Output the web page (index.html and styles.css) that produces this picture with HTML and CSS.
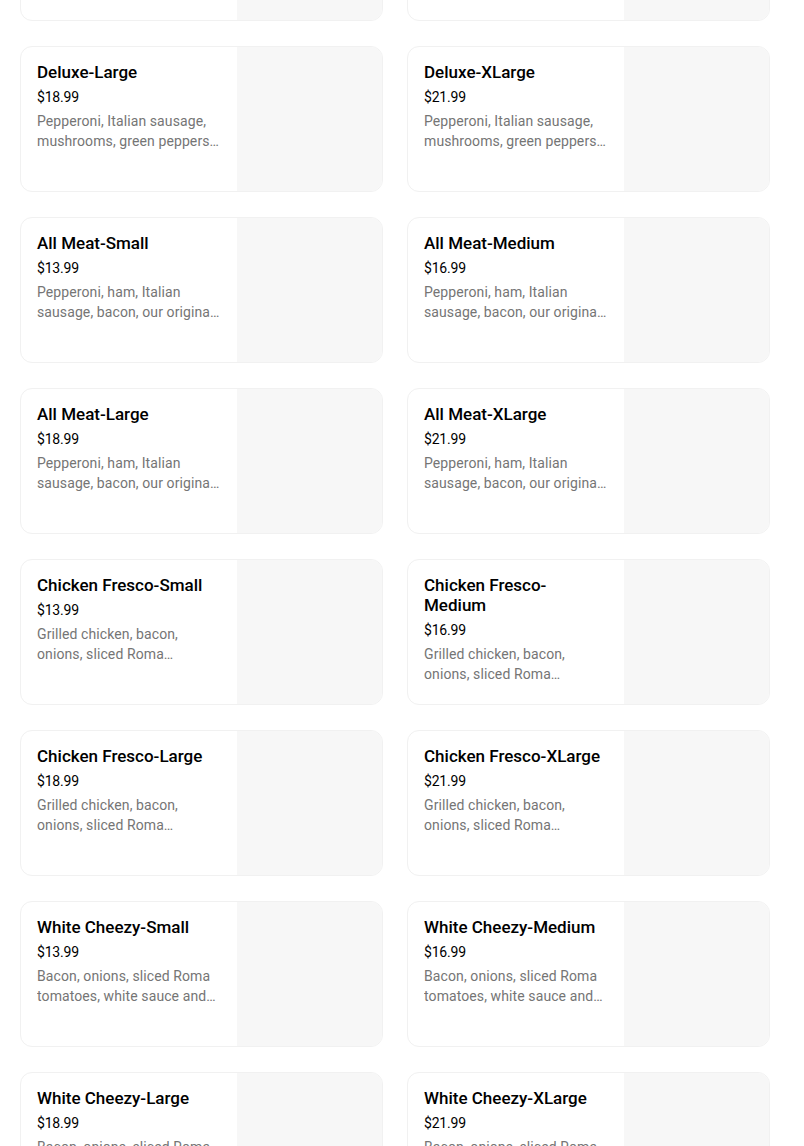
FILE: index.html
```html
<!doctype html>
<html>
<head>
	<meta charset="UTF-8">
	<meta name="viewport" content="width=device-width, initial-scale=1.0">
	<title>Menu</title>
	<link rel="stylesheet" href="styles.css">
</head>
<body>
	<div class="menu">
		<div class="item">
			<div class="info">
				<div class="name">Deluxe-Small</div>
				<div class="price">$13.99</div>
				<div class="desc">Pepperoni, Italian sausage, mushrooms, green peppers, onions and black olives.</div>
			</div>
			<div class="photo"></div>
		</div>
		<div class="item">
			<div class="info">
				<div class="name">Deluxe-Medium</div>
				<div class="price">$16.99</div>
				<div class="desc">Pepperoni, Italian sausage, mushrooms, green peppers, onions and black olives.</div>
			</div>
			<div class="photo"></div>
		</div>
		<div class="item">
			<div class="info">
				<div class="name">Deluxe-Large</div>
				<div class="price">$18.99</div>
				<div class="desc">Pepperoni, Italian sausage, mushrooms, green peppers, onions and black olives.</div>
			</div>
			<div class="photo"></div>
		</div>
		<div class="item">
			<div class="info">
				<div class="name">Deluxe-XLarge</div>
				<div class="price">$21.99</div>
				<div class="desc">Pepperoni, Italian sausage, mushrooms, green peppers, onions and black olives.</div>
			</div>
			<div class="photo"></div>
		</div>
		<div class="item">
			<div class="info">
				<div class="name">All Meat-Small</div>
				<div class="price">$13.99</div>
				<div class="desc">Pepperoni, ham, Italian sausage, bacon, our original beef and mozzarella cheese.</div>
			</div>
			<div class="photo"></div>
		</div>
		<div class="item">
			<div class="info">
				<div class="name">All Meat-Medium</div>
				<div class="price">$16.99</div>
				<div class="desc">Pepperoni, ham, Italian sausage, bacon, our original beef and mozzarella cheese.</div>
			</div>
			<div class="photo"></div>
		</div>
		<div class="item">
			<div class="info">
				<div class="name">All Meat-Large</div>
				<div class="price">$18.99</div>
				<div class="desc">Pepperoni, ham, Italian sausage, bacon, our original beef and mozzarella cheese.</div>
			</div>
			<div class="photo"></div>
		</div>
		<div class="item">
			<div class="info">
				<div class="name">All Meat-XLarge</div>
				<div class="price">$21.99</div>
				<div class="desc">Pepperoni, ham, Italian sausage, bacon, our original beef and mozzarella cheese.</div>
			</div>
			<div class="photo"></div>
		</div>
		<div class="item">
			<div class="info">
				<div class="name">Chicken Fresco-Small</div>
				<div class="price">$13.99</div>
				<div class="desc">Grilled chicken, bacon, onions, sliced Roma tomatoes and mozzarella cheese.</div>
			</div>
			<div class="photo"></div>
		</div>
		<div class="item">
			<div class="info">
				<div class="name">Chicken Fresco-Medium</div>
				<div class="price">$16.99</div>
				<div class="desc">Grilled chicken, bacon, onions, sliced Roma tomatoes and mozzarella cheese.</div>
			</div>
			<div class="photo"></div>
		</div>
		<div class="item">
			<div class="info">
				<div class="name">Chicken Fresco-Large</div>
				<div class="price">$18.99</div>
				<div class="desc">Grilled chicken, bacon, onions, sliced Roma tomatoes and mozzarella cheese.</div>
			</div>
			<div class="photo"></div>
		</div>
		<div class="item">
			<div class="info">
				<div class="name">Chicken Fresco-XLarge</div>
				<div class="price">$21.99</div>
				<div class="desc">Grilled chicken, bacon, onions, sliced Roma tomatoes and mozzarella cheese.</div>
			</div>
			<div class="photo"></div>
		</div>
		<div class="item">
			<div class="info">
				<div class="name">White Cheezy-Small</div>
				<div class="price">$13.99</div>
				<div class="desc">Bacon, onions, sliced Roma tomatoes, white sauce and mozzarella cheese.</div>
			</div>
			<div class="photo"></div>
		</div>
		<div class="item">
			<div class="info">
				<div class="name">White Cheezy-Medium</div>
				<div class="price">$16.99</div>
				<div class="desc">Bacon, onions, sliced Roma tomatoes, white sauce and mozzarella cheese.</div>
			</div>
			<div class="photo"></div>
		</div>
		<div class="item">
			<div class="info">
				<div class="name">White Cheezy-Large</div>
				<div class="price">$18.99</div>
				<div class="desc">Bacon, onions, sliced Roma tomatoes, white sauce and mozzarella cheese.</div>
			</div>
			<div class="photo"></div>
		</div>
		<div class="item">
			<div class="info">
				<div class="name">White Cheezy-XLarge</div>
				<div class="price">$21.99</div>
				<div class="desc">Bacon, onions, sliced Roma tomatoes, white sauce and mozzarella cheese.</div>
			</div>
			<div class="photo"></div>
		</div>
	</div>
</body>
</html>
```

FILE: styles.css
```css
* {
	padding: 0;
	margin: 0;
	box-sizing: border-box;
}
body {
	background-color: #fff;
	font-family: Roboto, "Liberation Sans", sans-serif;
	color: #000;
	overflow: hidden;
}
.menu {
	display: grid;
	grid-template-columns: 363px 363px;
	column-gap: 24px;
	row-gap: 25px;
	margin-top: -125px;
	padding-left: 20px;
}
.item {
	display: flex;
	height: 146px;
	border: 1px solid #f1f1f1;
	border-radius: 12px;
	overflow: hidden;
}
.info {
	flex: 1;
	padding: 15px 16px 16px 16px;
	min-width: 0;
}
.name {
	font-size: 17px;
	font-weight: 500;
	line-height: 20px;
	margin-bottom: 5px;
}
.price {
	font-size: 14px;
	line-height: 20px;
	letter-spacing: -0.2px;
	margin-bottom: 4px;
}
.desc {
	font-size: 14px;
	line-height: 20px;
	color: #757575;
	letter-spacing: 0.1px;
	display: -webkit-box;
	-webkit-line-clamp: 2;
	-webkit-box-orient: vertical;
	overflow: hidden;
}
.photo {
	width: 145px;
	flex-shrink: 0;
	background-color: #f7f7f7;
}
```
